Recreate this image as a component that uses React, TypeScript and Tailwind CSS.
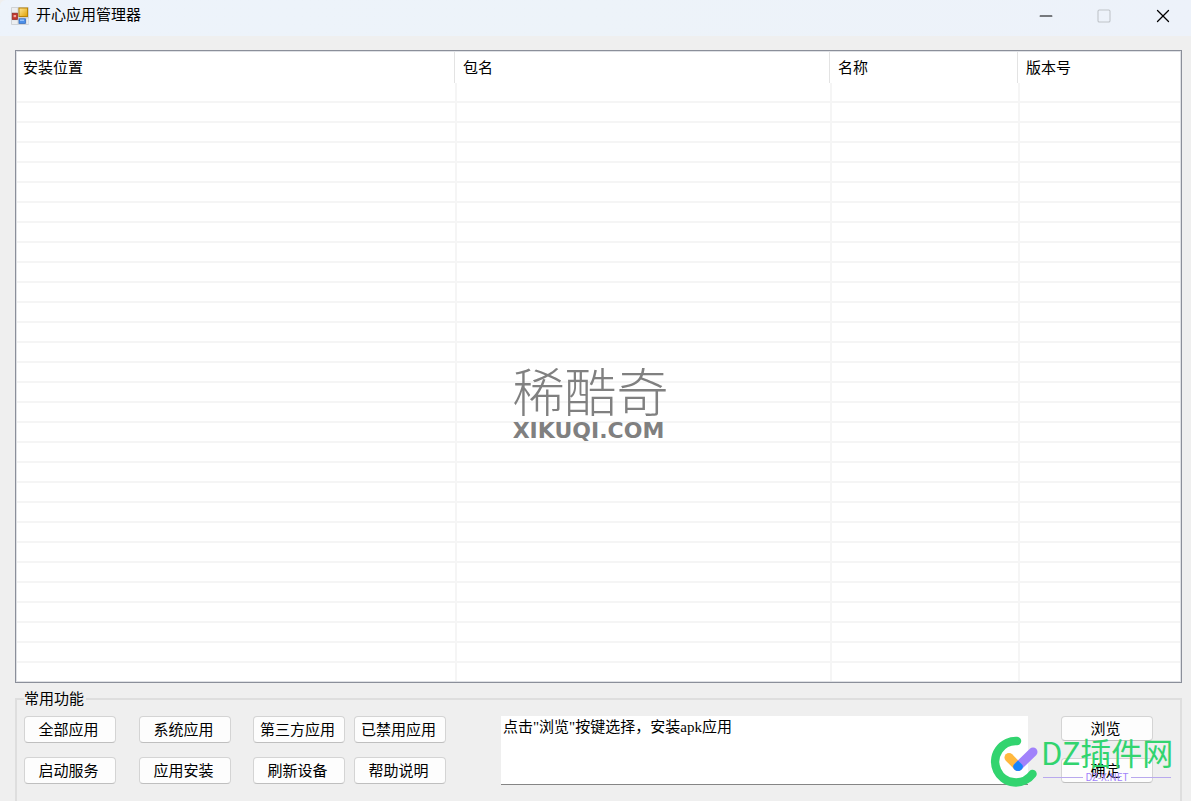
import React from 'react';
import { Minus, Square, X } from 'lucide-react';

const headers = ['安装位置', '包名', '名称', '版本号'];
const rows = Array.from({ length: 29 }, (_, i) => i);

const FormIcon: React.FC = () => (
  <svg className="h-[18px] w-[18px]" viewBox="0 0 18 18" aria-hidden="true">
    <defs>
      <linearGradient id="gold" x1="0" y1="0" x2="1" y2="1">
        <stop offset="0" stopColor="#ffe89a" />
        <stop offset="1" stopColor="#e0a000" />
      </linearGradient>
    </defs>
    <rect x="0" y="0" width="18" height="18" rx="1" fill="#cfd2d6" />
    <rect x="1" y="1" width="5.5" height="4.5" fill="#eceef0" />
    <rect x="1" y="13.2" width="5.5" height="3.8" fill="#eceef0" />
    <rect x="15.5" y="11.5" width="2" height="5.5" fill="#eceef0" />
    <rect x="8" y="1" width="8.5" height="8.5" fill="url(#gold)" stroke="#b98408" />
    <rect x="1.2" y="6.2" width="5.3" height="6.3" fill="#c3342c" stroke="#8f2a25" strokeWidth="0.7" />
    <rect x="2.6" y="8" width="2.5" height="2.2" fill="#f0a79e" />
    <rect x="8" y="11.8" width="6.5" height="4.6" fill="#4b8ee8" stroke="#2f68bd" strokeWidth="0.7" />
    <rect x="9" y="12.5" width="4" height="1.5" fill="#94c0fa" />
  </svg>
);

const ActionButton: React.FC<{ label: string; className?: string }> = ({ label, className = 'h-[27px]' }) => (
  <button
    type="button"
    className={`${className} w-[92px] rounded-[4px] border border-[#d4d4d4] border-b-[#bfbfbf] bg-[#fdfdfd] pr-[3px] pb-[2px] text-[15px] leading-[20px] whitespace-nowrap`}
  >
    {label}
  </button>
);

const ListView: React.FC = () => (
  <div className="border border-[#8b8f9a] bg-white">
    <div className="border border-[#dfe1e5]">
      <table className="w-full table-fixed border-separate border-spacing-0">
        <colgroup>
          <col className="w-[440px]" />
          <col className="w-[375px]" />
          <col className="w-[188px]" />
          <col />
        </colgroup>
        <thead>
          <tr>
            {headers.map((h) => (
              <th key={h} scope="col" className="group h-[31px] p-0 text-left font-normal">
                <div className="mr-[2px] h-[31px] border-r border-[#e3e3e3] pl-[6px] text-[15px] leading-[30px] group-last:border-r-0">
                  {h}
                </div>
              </th>
            ))}
          </tr>
        </thead>
        <tbody>
          {rows.map((r) => (
            <tr key={r}>
              {headers.map((h) => (
                <td key={h} className="h-[20px] border-r-2 border-b-2 border-[#f5f5f5] p-0 last:border-r-0" />
              ))}
            </tr>
          ))}
          <tr>
            {headers.map((h) => (
              <td key={h} className="h-[18px] border-r-2 border-[#f5f5f5] p-0 last:border-r-0" />
            ))}
          </tr>
        </tbody>
      </table>
    </div>
  </div>
);

const SiteMark: React.FC = () => (
  <div className="pointer-events-none absolute right-[18px] bottom-[14px] flex items-center gap-px">
    <svg className="h-[52px] w-[50px]" viewBox="0 0 50 52" fill="none" strokeLinecap="round" aria-hidden="true">
      <path d="M27 6 A20.7 20.7 0 1 0 42.5 39" stroke="#32d46f" strokeWidth="8.5" />
      <path d="M19 22.5 L28 31.5" stroke="#ffb83e" strokeWidth="9" />
      <path d="M43 17 L28 31.5" stroke="#a182fb" strokeWidth="9" />
      <path d="M28 25.5 L32 29.5 Q34 32 31.5 34.5 Q28 37.5 24.5 34.5 Q22 32 24 29.5 Z" fill="#1684fb" />
    </svg>
    <div className="w-[132px] pb-[4px]">
      <div className="pb-[4px] text-[31px] leading-[32px] whitespace-nowrap text-[#32d46f]">DZ插件网</div>
      <div className="flex items-center gap-[2px] px-[2px] text-[10px] leading-[10px] text-[#a182fb]">
        <span className="h-px flex-1 bg-[#b9a9ee]" />
        DZ-X.NET
        <span className="h-px flex-1 bg-[#b9a9ee]" />
      </div>
    </div>
  </div>
);

const App: React.FC = () => {
  return (
    <div className="relative flex h-screen flex-col overflow-hidden bg-[#efefef] font-['Noto_Sans_CJK_SC',sans-serif] text-[15px] text-black">
      <header className="flex h-[36px] shrink-0 items-center justify-between rounded-tl-md bg-linear-to-r from-[#edf3fb] via-[#edf3f9] to-[#edf2fa] pr-[17px] pb-[5px] pl-[11px]">
        <div className="flex items-center gap-[7px]">
          <FormIcon />
          <h1 className="pb-[4px] text-[15px] leading-[20px]">开心应用管理器</h1>
        </div>
        <div className="flex items-center gap-[38px]">
          <button type="button" aria-label="最小化">
            <Minus className="h-[20px] w-[20px]" strokeWidth={1.4} />
          </button>
          <button type="button" aria-label="最大化" disabled>
            <Square className="h-[16px] w-[20px] text-[#bfc3c8]" strokeWidth={1.6} />
          </button>
          <button type="button" aria-label="关闭">
            <X className="h-[22px] w-[22px]" strokeWidth={1.4} />
          </button>
        </div>
      </header>

      <main className="flex flex-1 flex-col pt-[14px] pr-[9px] pl-[15px]">
        <ListView />

        <fieldset className="mt-[6px] flex-1 border-2 border-b-0 border-[#dedede] pr-[27px] pl-[7px]">
          <legend className="pr-[2px] pb-[2px] text-[15px] leading-[18px]">常用功能</legend>
          <div className="flex items-start pt-[7px]">
            <div className="grid grid-cols-[115px_114px_101px_92px] gap-y-[14px]">
              <ActionButton label="全部应用" />
              <ActionButton label="系统应用" />
              <ActionButton label="第三方应用" />
              <ActionButton label="已禁用应用" />
              <ActionButton label="启动服务" />
              <ActionButton label="应用安装" />
              <ActionButton label="刷新设备" />
              <ActionButton label="帮助说明" />
            </div>
            <textarea
              aria-label="安装文件"
              readOnly
              defaultValue={'点击"浏览"按键选择，安装apk应用'}
              className="mr-[33px] ml-[55px] h-[69px] flex-1 resize-none border-b border-[#858585] bg-white px-[2px] font-['Liberation_Serif','Noto_Sans_CJK_SC',serif] text-[15px] leading-[22px] outline-none"
            />
            <div className="flex flex-col gap-[17px]">
              <ActionButton label="浏览" className="h-[25px]" />
              <ActionButton label="确定" className="h-[25px]" />
            </div>
          </div>
        </fieldset>
      </main>

      <div className="pointer-events-none absolute inset-x-0 top-[360px] flex flex-col items-center pr-[14px] text-[#808080]">
        <span className="pl-[4px] text-[52px] leading-[60px] font-light">稀酷奇</span>
        <span className="font-['DejaVu_Sans',sans-serif] text-[22px] leading-[22px] font-bold">XIKUQI.COM</span>
      </div>
      <SiteMark />
    </div>
  );
};

export default App;
